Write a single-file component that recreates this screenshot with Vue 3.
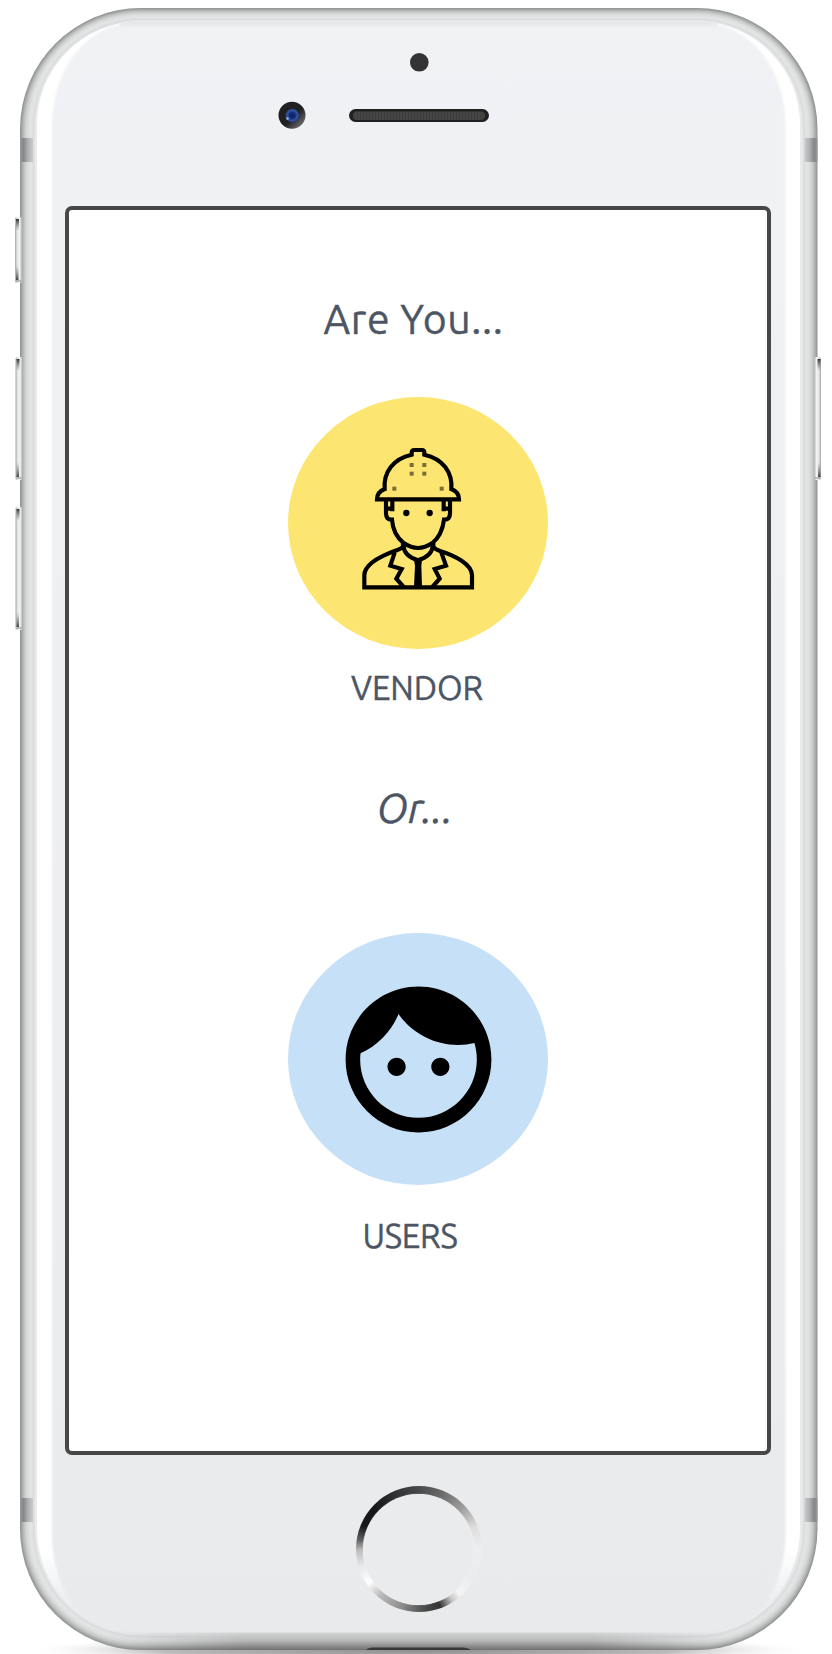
<script setup>
// Tones of the metal rim, from the outer edge inwards
const tones = ['#949696', '#a0a2a2', '#adafaf', '#b9bbbb', '#c4c6c6', '#cccece', '#d3d5d5', '#d9dbdb', '#dddfdf', '#e1e2e2', '#e3e4e4', '#e2e3e4', '#dfe0e2', '#d9dbdd', '#dfe1e3', '#e8eaec']
const rim = tones.map((fill, i) => ({
  fill,
  x: 20 + i,
  y: 8 + i * 0.84,
  w: 797.5 - i * 2,
  h: 1642 - i * 1.84,
  r: 121 - i
}))
const sideButtons = [
  { x: 15, y: 217, h: 66 },
  { x: 15.5, y: 357, h: 123 },
  { x: 15.5, y: 507, h: 123 }
]
</script>

<template>
  <main class="phone">
    <svg class="shell" viewBox="0 0 832 1654" aria-hidden="true">
      <defs>
        <linearGradient id="face" x1="0" y1="0" x2="0" y2="1">
          <stop offset="0" stop-color="#f1f2f4" />
          <stop offset="0.5" stop-color="#eeeff1" />
          <stop offset="1" stop-color="#e8eaec" />
        </linearGradient>
        <linearGradient id="topShade" x1="0" y1="0" x2="0" y2="1">
          <stop offset="0" stop-color="#dfe1e3" />
          <stop offset="1" stop-color="#dfe1e3" stop-opacity="0" />
        </linearGradient>
        <linearGradient id="bottomShade" gradientUnits="userSpaceOnUse" x1="0" y1="1629" x2="0" y2="1650">
          <stop offset="0" stop-color="#d0d2d4" stop-opacity="0" />
          <stop offset="0.2" stop-color="#d0d1d2" />
          <stop offset="0.55" stop-color="#b8b8b8" />
          <stop offset="1" stop-color="#707070" />
        </linearGradient>
        <linearGradient id="bottomMask" x1="0" y1="0" x2="1" y2="0">
          <stop offset="0.1" stop-color="#000" />
          <stop offset="0.28" stop-color="#fff" />
          <stop offset="0.72" stop-color="#fff" />
          <stop offset="0.9" stop-color="#000" />
        </linearGradient>
        <mask id="fadeEnds"><rect x="20" y="1600" width="797.5" height="54" fill="url(#bottomMask)" /></mask>
        <linearGradient id="band" x1="0" y1="0" x2="1" y2="0">
          <stop offset="0" stop-color="#9a9b9c" />
          <stop offset="0.25" stop-color="#858688" />
          <stop offset="0.6" stop-color="#adaeb0" />
          <stop offset="1" stop-color="#cbccce" />
        </linearGradient>
        <linearGradient id="button" x1="0" y1="0" x2="1" y2="0">
          <stop offset="0" stop-color="#a5a7a8" />
          <stop offset="0.3" stop-color="#e3e5e6" />
          <stop offset="0.65" stop-color="#f3f4f6" />
          <stop offset="1" stop-color="#aeb0b1" />
        </linearGradient>
        <linearGradient id="tip" x1="0" y1="0" x2="0" y2="1">
          <stop offset="0" stop-color="#333" />
          <stop offset="1" stop-color="#777" stop-opacity="0" />
        </linearGradient>
        <linearGradient id="tipEnd" x1="0" y1="1" x2="0" y2="0">
          <stop offset="0" stop-color="#444" />
          <stop offset="1" stop-color="#888" stop-opacity="0" />
        </linearGradient>
        <linearGradient id="crescentFade" gradientUnits="userSpaceOnUse" x1="0" y1="1550" x2="0" y2="1612">
          <stop offset="0" stop-color="#e8eaec" stop-opacity="0" />
          <stop offset="1" stop-color="#e8eaec" />
        </linearGradient>
        <radialGradient id="floor">
          <stop offset="0" stop-color="#8e8e8e" />
          <stop offset="0.65" stop-color="#bbb" />
          <stop offset="1" stop-color="#fff" stop-opacity="0" />
        </radialGradient>
        <linearGradient id="lensRim" x1="0" y1="0" x2="1" y2="1">
          <stop offset="0.55" stop-color="#202022" />
          <stop offset="1" stop-color="#8a8a8a" />
        </linearGradient>
        <radialGradient id="lens">
          <stop offset="0" stop-color="#0c1c58" />
          <stop offset="0.4" stop-color="#142d7a" />
          <stop offset="0.75" stop-color="#3456a4" />
          <stop offset="1" stop-color="#22305c" />
        </radialGradient>
        <pattern id="mesh" width="3" height="8" patternUnits="userSpaceOnUse">
          <rect width="3" height="8" fill="#454546" />
          <rect width="1" height="8" fill="#3e3e3f" />
        </pattern>
        <clipPath id="glass"><rect x="37" y="21.5" width="763" height="1611" rx="103" /></clipPath>
        <filter id="soft"><feGaussianBlur stdDeviation="0.8" /></filter>
      </defs>

      <ellipse cx="418" cy="1650" rx="395" ry="17" fill="url(#floor)" />

      <rect v-for="r in rim" :key="r.x" :x="r.x" :y="r.y" :width="r.w" :height="r.h" :rx="r.r" :fill="r.fill" />
      <path d="M20 1530a120 120 0 0 0 120 120h557.500a120 120 0 0 0 120-120z" fill="url(#bottomShade)" mask="url(#fadeEnds)" />
      <path d="M366 1650q2-2.500 7-2.500h90q5 0 8 2.500z" fill="#383838" />

      <g v-for="b in sideButtons" :key="b.y">
        <rect :x="b.x" :y="b.y" width="7" :height="b.h" rx="2" fill="url(#button)" />
        <rect :x="b.x + 1" :y="b.y + 2" width="3" height="12" fill="url(#tip)" />
        <rect :x="b.x + 1" :y="b.y + b.h - 18" width="2.5" height="15" fill="url(#tipEnd)" />
        <rect :x="b.x + 1" :y="b.y + b.h - 2.5" width="5" height="1" fill="#888" />
      </g>
      <g transform="matrix(-1 0 0 1 837 0)">
        <rect x="16" y="357" width="7" height="123" rx="2" fill="url(#button)" />
        <rect x="16.5" y="359" width="3" height="12" fill="url(#tip)" />
        <rect x="16.5" y="462" width="2.5" height="15" fill="url(#tipEnd)" />
        <rect x="17" y="477.500" width="5" height="1" fill="#888" />
      </g>

      <rect x="20" y="138" width="13" height="24" fill="url(#band)" />
      <rect x="20" y="1498" width="13" height="24" fill="url(#band)" />
      <g transform="matrix(-1 0 0 1 837.500 0)">
        <rect x="20" y="138" width="13" height="24" fill="url(#band)" />
        <rect x="20" y="1498" width="13" height="24" fill="url(#band)" />
      </g>

      <g clip-path="url(#glass)">
        <rect x="36" y="20" width="766" height="1596" fill="#fff" />
        <rect x="36" y="1540" width="766" height="96" fill="url(#crescentFade)" />
        <path
          d="M52 125C52 78 78 20 150 20H687C759 20 785.500 78 785.500 125V1535C785.500 1565 774 1592 763 1607L700 1629H137L74 1607C63 1592 52 1565 52 1535Z"
          fill="url(#face)" filter="url(#soft)"
        />
        <rect x="120" y="21" width="597" height="7" fill="url(#topShade)" />
      </g>

      <circle cx="419.300" cy="62.300" r="9.300" fill="#333335" />
      <circle cx="292" cy="115.300" r="13.500" fill="url(#lensRim)" />
      <circle cx="292.300" cy="115.500" r="7" fill="url(#lens)" />
      <circle cx="287.500" cy="118.500" r="1.300" fill="#9cbce6" />
      <rect x="349" y="109" width="140" height="13" rx="6.500" fill="#202021" />
      <rect x="353" y="111.500" width="132" height="8.500" rx="4" fill="url(#mesh)" />
    </svg>

    <section class="screen">
      <h1 class="title">Are You...</h1>
      <button class="choice vendor" aria-label="Vendor">
        <svg class="worker" viewBox="0 0 480 540">
          <g fill="none" stroke="#000" stroke-width="12.500">
            <path d="M134 177C130 126 160 86 215 74V68Q215 60 223 60H246Q253 60 253 68V74C308 86 338 126 334 177Q357 186 357 208H111Q111 186 134 177Z" />
            <path d="M138 212V250Q138 270 156 269C158 300 174 326 192 340Q234 368 276 340C296 324 308 300 312 269Q330 270 330 250V212" />
            <path d="M157 212V244M311 212V244M140 236H158M310 236H328" />
            <path d="M189 338V350Q186 354 170 361C128 376 73 402 73 436V472H396V436C396 402 342 376 300 363Q284 357 280 350V338" />
            <path d="M190 346Q192 378 234 391Q276 378 279 346" />
            <path d="M164 368L151 407L185 417L169 446L191 471M304 368L318 407L284 417L299 446L277 471" />
          </g>
          <path d="M222 390H246L244 408L246 470H222L225 408Z" />
          <circle cx="199" cy="249" r="9.500" /><circle cx="269" cy="249" r="9.500" />
          <g fill="#000" fill-opacity=".52">
            <rect x="209" y="99" width="12" height="12" /><rect x="247" y="99" width="12" height="12" />
            <rect x="209" y="125" width="12" height="12" /><rect x="247" y="125" width="12" height="12" />
            <rect x="157" y="170" width="12" height="12" /><rect x="299" y="170" width="12" height="12" />
          </g>
        </svg>
      </button>
      <p class="label vendor-label">VENDOR</p>
      <p class="or">Or...</p>
      <button class="choice users" aria-label="Users">
        <svg class="person" viewBox="0 0 24 24">
          <path d="M9 11.750c-.69 0-1.250.56-1.250 1.250s.56 1.250 1.250 1.250 1.250-.56 1.250-1.250-.56-1.250-1.250-1.250zm6 0c-.69 0-1.250.56-1.250 1.250s.56 1.250 1.250 1.250 1.250-.56 1.250-1.250-.56-1.250-1.250-1.250zM12 2C6.480 2 2 6.480 2 12s4.480 10 10 10 10-4.480 10-10S17.520 2 12 2zm0 18c-4.410 0-8-3.590-8-8 0-.29.02-.58.05-.86 2.360-1.050 4.230-2.980 5.210-5.370C11.070 8.330 14.050 10 17.420 10c.78 0 1.530-.09 2.250-.26.21.71.33 1.470.33 2.260 0 4.410-3.590 8-8 8z" />
        </svg>
      </button>
      <p class="label users-label">USERS</p>
    </section>

    <div class="home"><div class="home-face"></div></div>
  </main>
</template>

<style>
body { margin: 0; background: #fff; }
</style>

<style scoped>
.phone {
  position: relative;
  box-sizing: border-box;
  width: 832px;
  height: 1654px;
  padding: 206px 0 0 65px;
  overflow: hidden;
  font-family: Ubuntu, "Noto Sans", "Open Sans", sans-serif;
  color: #4b5563;
}
.shell {
  position: absolute;
  inset: 0;
  width: 832px;
  height: 1654px;
}
.screen {
  position: relative;
  box-sizing: border-box;
  width: 706px;
  height: 1249px;
  border: 4px solid #474747;
  border-radius: 7px;
  background: #fff;
  display: flex;
  flex-direction: column;
  align-items: center;
}
.title, .label, .or {
  margin: 0;
  font-weight: 400;
  white-space: nowrap;
  -webkit-text-stroke: 0.4px currentColor;
}
.title {
  margin-top: 81px;
  padding-right: 9px;
  height: 56px;
  font-size: 41px;
  line-height: 56px;
  letter-spacing: 0.6px;
}
.choice {
  width: 260px;
  height: 252px;
  padding: 0;
  border: 0;
  border-radius: 50%;
  display: flex;
  justify-content: center;
}
.vendor { margin-top: 50px; background: #fce571; }
.users { margin-top: 97px; background: #c6e0f7; align-items: center; }
.worker { width: 160px; height: 180px; margin: 33px 0 0 4px; }
.person { width: 175px; height: 175px; }
.label {
  height: 44px;
  font-size: 33px;
  line-height: 44px;
}
.vendor-label { margin-top: 17px; padding-right: 2px; letter-spacing: -0.1px; }
.or {
  margin-top: 70px;
  padding-right: 6px;
  height: 56px;
  font-size: 41px;
  line-height: 56px;
  font-style: italic;
}
.users-label { margin-top: 29px; padding-right: 16px; letter-spacing: -0.2px; }
.home {
  position: relative;
  display: grid;
  place-items: center;
  width: 126px;
  height: 126px;
  margin: 31px 0 0 290.500px;
  border-radius: 50%;
  background: conic-gradient(#48494a 0deg, #666 20deg, #999 45deg, #ddd 68deg, #eee 90deg, #eaebec 120deg, #f5f5f5 138deg, #c8c8c8 147deg, #333 160deg, #4c4c4c 175deg, #888 195deg, #bbb 220deg, #fff 236deg, #e5e5e5 255deg, #bbb 269deg, #666 278deg, #18191b 292deg, #16171a 312deg, #2e2f30 335deg, #48494a 360deg);
}
.home-face {
  width: 111px;
  height: 111px;
  border-radius: 50%;
  background: #e9ebed;
  box-shadow: 0 0 1px #fff;
}
</style>
